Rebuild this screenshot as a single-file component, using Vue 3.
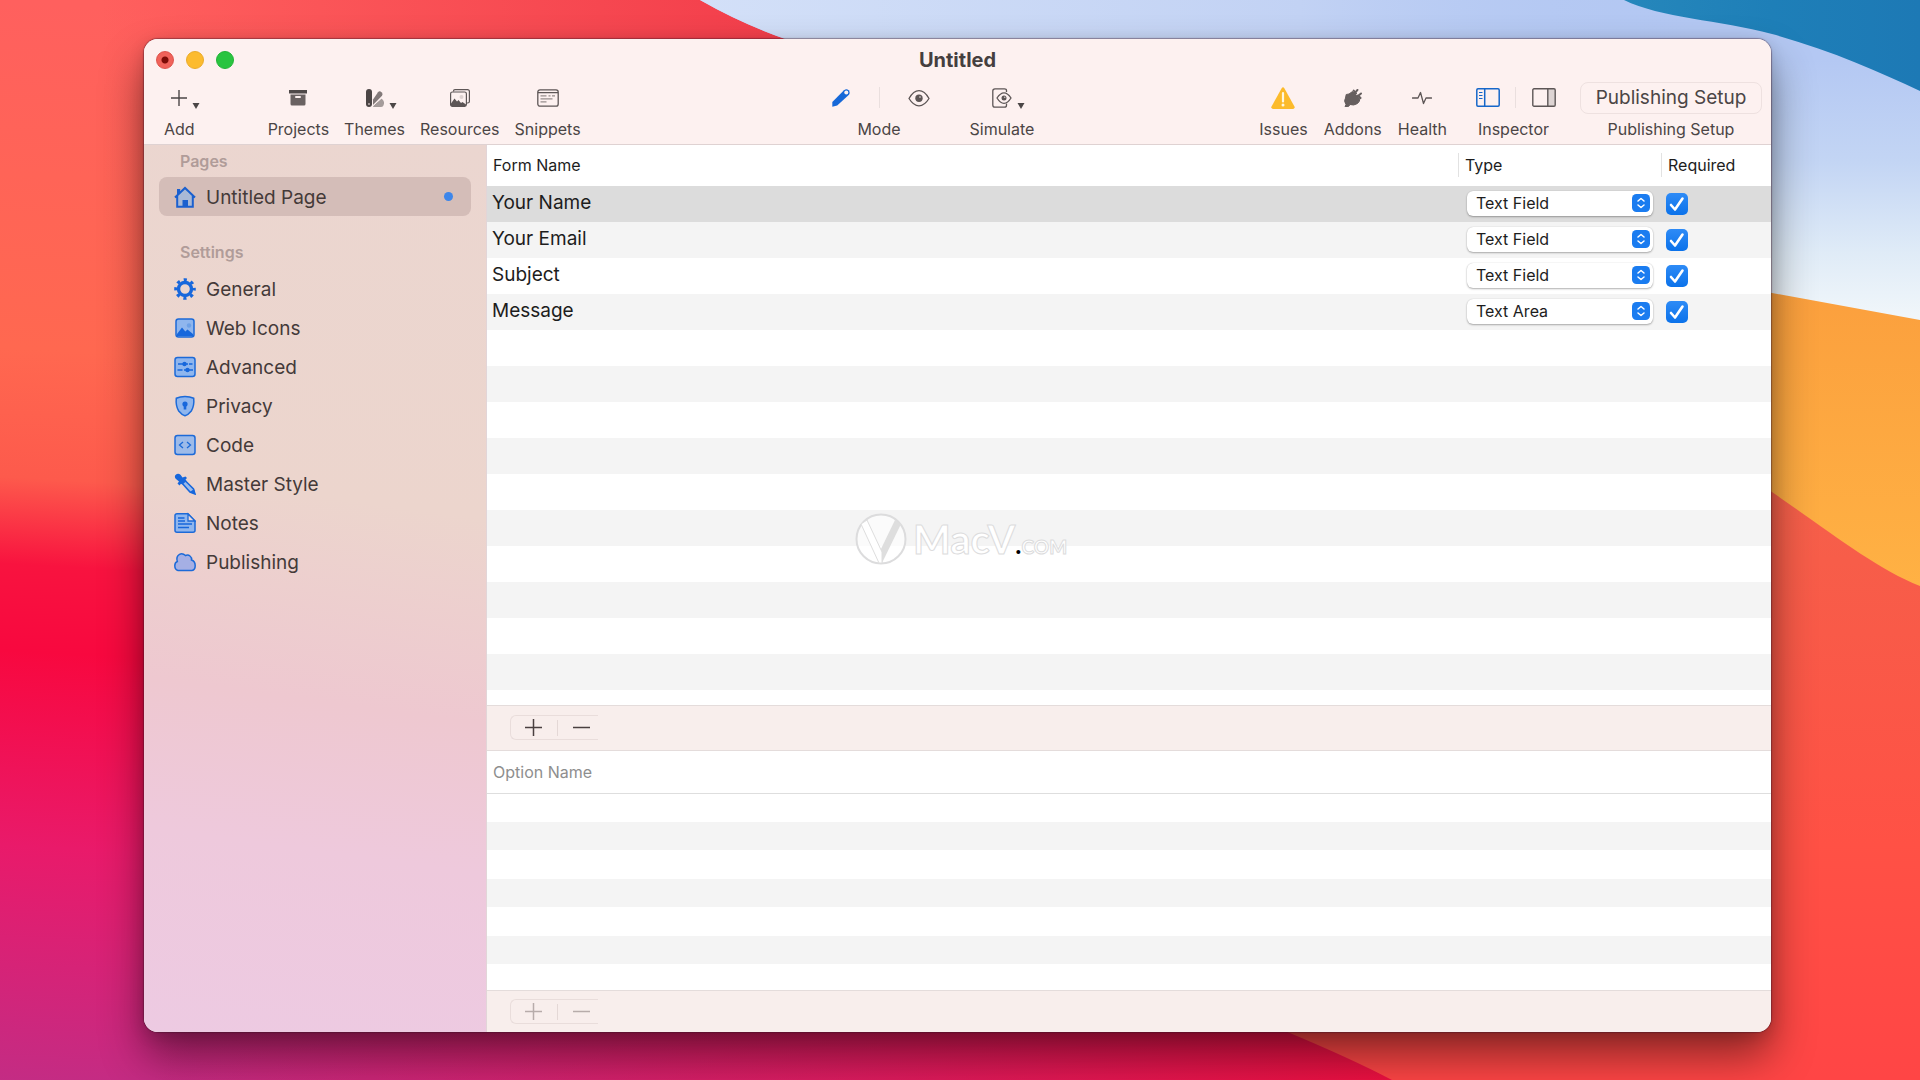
<script setup>
import { ref } from 'vue'

const settings = ['General', 'Web Icons', 'Advanced', 'Privacy', 'Code', 'Master Style', 'Notes', 'Publishing']

const fields = ref([
  { name: 'Your Name', type: 'Text Field', required: true },
  { name: 'Your Email', type: 'Text Field', required: true },
  { name: 'Subject', type: 'Text Field', required: true },
  { name: 'Message', type: 'Text Area', required: true },
])
const selected = ref(0)
const types = ['Text Field', 'Text Area']
</script>

<template>
  <div class="desktop">
    <svg class="wallpaper" viewBox="0 0 1920 1080" preserveAspectRatio="none" aria-hidden="true">
      <defs>
        <linearGradient id="warm" gradientUnits="userSpaceOnUse" x1="0" y1="0" x2="-60" y2="1080">
          <stop offset="0" stop-color="#ff605e" />
          <stop offset=".32" stop-color="#ff6850" />
          <stop offset=".44" stop-color="#fd5a4c" />
          <stop offset=".52" stop-color="#f8133f" />
          <stop offset=".6" stop-color="#f8083f" />
          <stop offset=".78" stop-color="#e91a6a" />
          <stop offset="1" stop-color="#c32c84" />
        </linearGradient>
        <linearGradient id="glow" x1="0" y1="0" x2="1" y2="0">
          <stop offset="0" stop-color="#f23c4a" stop-opacity="0" />
          <stop offset="1" stop-color="#f23c4a" />
        </linearGradient>
        <linearGradient id="floor" x1="0" y1="0" x2="1" y2="0">
          <stop offset="0" stop-color="#e81450" stop-opacity="0" />
          <stop offset="1" stop-color="#ee1040" />
        </linearGradient>
        <linearGradient id="sky" gradientUnits="userSpaceOnUse" x1="0" y1="60" x2="0" y2="315">
          <stop offset="0" stop-color="#b4c8f3" />
          <stop offset=".4" stop-color="#c3d5f4" />
          <stop offset=".75" stop-color="#dfebf7" />
          <stop offset="1" stop-color="#f0f6fa" />
        </linearGradient>
        <linearGradient id="skyTop" gradientUnits="userSpaceOnUse" x1="700" y1="0" x2="1700" y2="0">
          <stop offset="0" stop-color="#d3e0f8" />
          <stop offset=".6" stop-color="#c2d2f4" />
          <stop offset="1" stop-color="#b0c6f2" stop-opacity="0" />
        </linearGradient>
        <linearGradient id="amber" x1="0" y1="0" x2="0" y2="1">
          <stop offset="0" stop-color="#fb9e3d" />
          <stop offset="1" stop-color="#ffb244" />
        </linearGradient>
        <linearGradient id="coral" gradientUnits="userSpaceOnUse" x1="0" y1="490" x2="0" y2="1080">
          <stop offset="0" stop-color="#f5604a" />
          <stop offset=".6" stop-color="#ff5145" />
          <stop offset="1" stop-color="#ff4545" />
        </linearGradient>
        <linearGradient id="ocean" x1="0" y1="0" x2="1" y2="0">
          <stop offset="0" stop-color="#2687bb" />
          <stop offset=".5" stop-color="#1e7fb8" />
          <stop offset="1" stop-color="#1d79b5" />
        </linearGradient>
      </defs>
      <rect width="1920" height="1080" fill="url(#warm)" />
      <rect x="100" width="720" height="400" fill="url(#glow)" />
      <rect x="150" y="700" width="1250" height="380" fill="url(#floor)" />
      <path d="M700 0Q742 24 788 40L1000 340H1920V0Z" fill="url(#sky)" />
      <path d="M700 0Q742 24 788 40L850 60H1700V0Z" fill="url(#skyTop)" />
      <path d="M1624 0C1660 18 1720 20 1772 34C1830 50 1880 72 1920 91V0Z" fill="url(#ocean)" />
      <path d="M1600 262L1772 293L1920 320V600H1600Z" fill="url(#amber)" />
      <path d="M1600 370L1772 492C1830 532 1875 568 1920 586V1080H1392Q1350 1058 1285 1031L1200 900Z" fill="url(#coral)" />
    </svg>

    <main class="window">
      <header class="chrome">
        <div class="titlebar">
          <div class="lights">
            <button class="light close" aria-label="Close"></button>
            <button class="light minimise" aria-label="Minimise"></button>
            <button class="light zoom" aria-label="Zoom"></button>
          </div>
          <h1>Untitled</h1>
        </div>

        <div class="toolbar">
          <div class="tools left">
            <button class="tool add">
              <span class="glyph">
                <svg width="16" height="16" viewBox="0 0 16 16"><path d="M8 0V16M0 8H16" stroke="#4b4646" stroke-width="1.4" /></svg>
                <svg class="caret" width="8" height="6" viewBox="0 0 8 6"><path d="M.5 0h7L4 6Z" fill="#4b4646" /></svg>
              </span>
              Add
            </button>
            <button class="tool">
              <span class="glyph">
                <svg width="18" height="16" viewBox="0 0 18 16">
                  <path d="M0 0h18v3.500H0z" fill="#4f4949" />
                  <path d="M1.500 4.500h15V14a1.500 1.500 0 0 1-1.500 1.500H3A1.500 1.500 0 0 1 1.500 14Z" fill="#6a6262" />
                  <rect x="6" y="6" width="6" height="2" rx="1" fill="#fdf1f0" />
                </svg>
              </span>
              Projects
            </button>
            <button class="tool">
              <span class="glyph">
                <svg width="18" height="18" viewBox="0 0 18 18">
                  <path d="M7.500 16.500 15.500 9.500Q18.500 12 18 14.500 17.500 18 15 18H7Z" fill="#a59c9b" />
                  <path d="M7 10.500 12 3.200Q13.500 1.500 15.500 3.200 17.500 5 16 6.800L7 16Z" fill="#827979" />
                  <path d="M7.200 16.500 16 8.500" stroke="#fdf1f0" stroke-width="1" />
                  <rect width="6" height="18" rx="3" fill="#4b4545" />
                  <circle cx="3" cy="15" r="1" fill="#bdb2b1" />
                </svg>
                <svg class="caret" width="8" height="6" viewBox="0 0 8 6"><path d="M.5 0h7L4 6Z" fill="#4b4646" /></svg>
              </span>
              Themes
            </button>
            <button class="tool">
              <span class="glyph">
                <svg width="20" height="18" viewBox="0 0 20 18" fill="none" stroke="#5d5656" stroke-width="1.200">
                  <path d="M3.500 2.500V2Q3.500.6 5 .6h12.500Q19.400.6 19.400 2.500v10q0 1.500-1.900 1.500H17" />
                  <rect x=".6" y="3" width="15.800" height="14.400" rx="1.800" />
                  <path d="M1 14.500 4.500 9.500 7 12.500 8.500 11 11 14 12.500 13 16 15.500V17H1Z" fill="#5d5656" stroke="none" />
                  <circle cx="11.500" cy="8" r="2" fill="#ddd2d1" stroke="none" />
                </svg>
              </span>
              Resources
            </button>
            <button class="tool">
              <span class="glyph">
                <svg width="22" height="18" viewBox="0 0 22 18" fill="none" stroke="#5d5656" stroke-width="1.300">
                  <rect x=".8" y=".8" width="20.400" height="16.400" rx="2.200" />
                  <path d="M1 3.700h20" />
                  <path d="M3.500 6.800h6M11.500 6.800h2M15 6.800h3M3.500 9.800h12M3.500 12.800h6" stroke="#968d8c" stroke-width="1.200" />
                </svg>
              </span>
              Snippets
            </button>
          </div>

          <div class="tools centre">
            <div class="tool mode">
              <div class="glyph pair">
                <button aria-label="Edit">
                  <svg width="18" height="18" viewBox="0 0 18 18">
                    <path d="M.3 17.700V12.900L12 1.300Q14.500-.6 16.700 1.300 18.600 3.600 16.700 6L5.200 16.500Z" fill="#1668d8" />
                    <circle cx="14.300" cy="3.600" r="2" fill="#fdf1f0" />
                  </svg>
                </button>
                <i></i>
                <button aria-label="Preview">
                  <svg width="22" height="18" viewBox="0 0 22 18" fill="none">
                    <path d="M1 9.500Q5.500 1.700 11 1.700T21 9.500Q16.500 16.800 11 16.800T1 9.500Z" stroke="#5d5656" stroke-width="1.300" />
                    <circle cx="11" cy="9.300" r="3.700" fill="#5d5656" />
                    <circle cx="12" cy="8" r="1" fill="#b5abab" />
                  </svg>
                </button>
              </div>
              <span>Mode</span>
            </div>
            <button class="tool">
              <span class="glyph">
                <svg width="20" height="20" viewBox="0 0 20 20" fill="none" stroke="#5d5656" stroke-width="1.300">
                  <path d="M14.500 4V2.500Q14.500.8 12.500.8H3Q.8.8.8 3v14q0 2.200 2.200 2.200h9.500q2 0 2-2V15.500" />
                  <path d="M5 10Q8.300 4.800 12 4.800T19 10Q15.700 15.300 12 15.300T5 10Z" />
                  <circle cx="12" cy="10" r="2.500" fill="#5d5656" stroke="none" />
                  <circle cx="12.700" cy="9.200" r=".8" fill="#cdc4c3" stroke="none" />
                </svg>
                <svg class="caret" width="8" height="6" viewBox="0 0 8 6"><path d="M.5 0h7L4 6Z" fill="#4b4646" /></svg>
              </span>
              Simulate
            </button>
          </div>

          <div class="tools right">
            <button class="tool">
              <span class="glyph">
                <svg width="24" height="22" viewBox="0 0 24 22">
                  <path d="M10.800.9Q12-.4 13.200.9L23.600 19.700Q24 21.700 22.200 22H1.800Q0 21.700.4 19.700Z" fill="#fcbb2b" />
                  <path d="M12 6v8.500" stroke="#fff8df" stroke-width="2.200" stroke-linecap="round" />
                  <circle cx="12" cy="18" r="1.500" fill="#fff8df" />
                </svg>
              </span>
              Issues
            </button>
            <button class="tool">
              <span class="glyph">
                <svg width="18" height="18" viewBox="0 0 18 18">
                  <path d="M12 4.500 9.700 1.600M16.500 9 14 6.500M10.500 4.500 13.500.9M13.500 7.500 17 4.500" stroke="#665f5f" stroke-width="2" stroke-linecap="round" />
                  <path d="M8.500 2.500 15.800 10Q16 12.500 13.500 14.500 9.500 17 6 15.500L4.800 17.200Q2.500 18.500 1 17.700L2 15.500Q-.5 12 1.500 9L2.200 5.500 5 5Z" fill="#665f5f" stroke="#665f5f" stroke-linejoin="round" />
                </svg>
              </span>
              Addons
            </button>
            <button class="tool">
              <span class="glyph">
                <svg width="20" height="14" viewBox="0 0 20 14"><path d="M.5 7H6L8.500 1.500 11.500 12.500 14 7H19.500" fill="none" stroke="#5d5656" stroke-width="1.300" stroke-linejoin="round" stroke-linecap="round" /></svg>
              </span>
              Health
            </button>
            <div class="tool inspector">
              <div class="glyph pair">
                <button aria-label="Toggle sidebar">
                  <svg width="24" height="19" viewBox="0 0 24 19" fill="none" stroke="#1667c9" stroke-width="1.500">
                    <rect x=".8" y=".8" width="22.400" height="17.400" rx="1.200" /><path d="M8.700 1v17" />
                    <path d="M3 4.500h3.500M3 7.500h3.500M3 10.500h3.500" stroke-width="1" />
                  </svg>
                </button>
                <i></i>
                <button aria-label="Toggle inspector">
                  <svg width="24" height="19" viewBox="0 0 24 19" fill="none" stroke="#5d5656" stroke-width="1.400">
                    <path d="M16 1h7v17h-7z" fill="#ddd4d3" stroke="none" />
                    <rect x=".8" y=".8" width="22.400" height="17.400" rx="1.200" /><path d="M15.800 1v17" />
                  </svg>
                </button>
              </div>
              <span>Inspector</span>
            </div>
            <div class="tool setup">
              <div class="glyph"><button class="pill">Publishing Setup</button></div>
              <span>Publishing Setup</span>
            </div>
          </div>
        </div>
      </header>

      <div class="body">
        <nav class="sidebar">
          <section>
            <h2>Pages</h2>
            <a href="#page" class="entry current">
              <svg width="22" height="22" viewBox="0 0 22 22">
                <path d="M3.500 10 11 3l7.500 7v10.500h-15Z" fill="#a9b9d6" />
                <path d="M1 11.500 11 2l10 9.500M3.200 10V20.700H18.800V10" fill="none" stroke="#1a60cf" stroke-width="2" />
                <path d="M3 3h3.200v4L3 9.500ZM8.500 14h5.500v7H8.500Z" fill="#1a60cf" />
              </svg>
              Untitled Page
              <b class="dot"></b>
            </a>
          </section>
          <section>
            <h2>Settings</h2>
            <a v-for="item in settings" :key="item" href="#settings" class="entry">
              <svg v-if="item === 'General'" width="22" height="22" viewBox="0 0 22 22" fill="none" stroke="#1767dc">
                <circle cx="11" cy="11" r="6.500" stroke-width="3.400" />
                <circle cx="11" cy="11" r="9.300" stroke-width="3" stroke-dasharray="3.200 4.104" stroke-dashoffset="1.600" />
              </svg>
              <svg v-else-if="item === 'Web Icons'" width="22" height="22" viewBox="0 0 22 22">
                <rect x="2" y="2" width="18" height="18" rx="2.500" fill="#8fb6ee" stroke="#1c6ad8" stroke-width="1.500" />
                <path d="M3 17 8 10.500l3.300 4 2.200-2L19 17v2H3Z" fill="#1767dc" /><circle cx="15" cy="8.500" r="2.200" fill="#6ea1e6" />
              </svg>
              <svg v-else-if="item === 'Advanced'" width="22" height="22" viewBox="0 0 22 22">
                <rect x="1" y="1.500" width="20" height="19" rx="2.500" fill="#8fb6ee" stroke="#1c6ad8" stroke-width="1.500" />
                <path d="M4 8h10M15 8h3.500M3.500 14h5M10 14h9" stroke="#1767dc" stroke-width="1.400" /><circle cx="10.500" cy="8" r="2.200" fill="#1767dc" /><circle cx="13.500" cy="14" r="2.200" fill="#1767dc" />
              </svg>
              <svg v-else-if="item === 'Privacy'" width="22" height="22" viewBox="0 0 22 22">
                <path d="M11 1.500Q16 1.500 19.700 3.200 20.500 11 17.300 16 14 20 11 20.800 8 20 4.700 16 1.500 11 2.300 3.200 6 1.500 11 1.500Z" fill="#8fb6ee" stroke="#1c6ad8" stroke-width="1.500" />
                <circle cx="11" cy="9" r="2.600" fill="#1767dc" /><path d="M9.700 10h2.600v4.500H9.700Z" fill="#1767dc" />
              </svg>
              <svg v-else-if="item === 'Code'" width="22" height="22" viewBox="0 0 22 22">
                <rect x="1" y="1.500" width="20" height="19" rx="2.500" fill="#9dbbe9" stroke="#1c6ad8" stroke-width="1.500" />
                <path d="M9 8 5.500 11 9 14M13 8l3.500 3-3.500 3" fill="none" stroke="#1c6ad8" stroke-width="1.300" />
              </svg>
              <svg v-else-if="item === 'Master Style'" width="22" height="22" viewBox="0 0 22 22">
                <path d="M8 10 11 7.500 19.500 16 21 21 16 19Z" fill="#9dbbe9" stroke="#1767dc" stroke-width="1.500" />
                <path d="M1.500 2Q4-.2 6.500 1.800L8.500 4.500 11.500 3.500 13 5 11.500 6.500 12.500 8 8.500 11.500 7 10.800 5.500 12.500 3.500 10.500 5 8.500 2 6Q0 4 1.500 2ZM16 19l4-3 1.500 5.500Z" fill="#1767dc" />
              </svg>
              <svg v-else-if="item === 'Notes'" width="22" height="22" viewBox="0 0 22 22">
                <path d="M3 1.800H14L21 9v9.500q0 1.700-2 1.700H3q-2 0-2-1.700v-15Q1 1.800 3 1.800Z" fill="#8fb6ee" stroke="#1c6ad8" stroke-width="1.500" />
                <path d="M14 2v7h7Z" fill="#ecd9da" stroke="#1c6ad8" stroke-width="1.300" />
                <path d="M4 6h6.500M4 9h7M4 12h14M4 15.500h11" stroke="#1767dc" stroke-width="1.400" />
              </svg>
              <svg v-else width="22" height="22" viewBox="0 0 22 22">
                <path d="M4 19.500Q.8 18.700.8 14.800.8 11.300 3.300 10.500 1.800 5.500 5.500 3.300 8.500 1.700 11.500 4.500 14 3.300 16 5 18 6.500 17.500 9 21.200 10 21.200 14.800 21.200 19 18 19.500Z" fill="#a5afe4" stroke="#1c6ad8" stroke-width="1.500" />
              </svg>
              {{ item }}
            </a>
          </section>
        </nav>

        <div class="content">
          <div class="pane fields">
            <table>
              <thead>
                <tr><th>Form Name</th><th class="type"><span>Type</span></th><th class="required"><span>Required</span></th></tr>
              </thead>
              <tbody>
                <tr v-for="(field, i) in fields" :key="field.name" :class="{ selected: i === selected }" @click="selected = i">
                  <td>{{ field.name }}</td>
                  <td class="type">
                    <div class="popup">
                      <select v-model="field.type" :aria-label="'Type of ' + field.name">
                        <option v-for="t in types" :key="t">{{ t }}</option>
                      </select>
                      <svg width="18" height="18" viewBox="0 0 18 18">
                        <rect width="18" height="18" rx="4.500" fill="#1a7cf0" />
                        <path d="M6 7 9 4.500 12 7M6 11l3 2.500L12 11" fill="none" stroke="#fff" stroke-width="1.500" stroke-linecap="round" stroke-linejoin="round" />
                      </svg>
                    </div>
                  </td>
                  <td class="required">
                    <div class="tick">
                      <input v-model="field.required" type="checkbox" :aria-label="field.name + ' is required'">
                      <svg width="22" height="22" viewBox="0 0 22 22"><path d="M5 12 9 16.500 16.500 5.500" fill="none" stroke="#fff" stroke-width="2.600" stroke-linecap="round" stroke-linejoin="round" /></svg>
                    </div>
                  </td>
                </tr>
              </tbody>
            </table>
          </div>
          <div class="strip">
            <div class="segments">
              <button aria-label="Add field"><svg width="17" height="17" viewBox="0 0 17 17"><path d="M8.500 0V17M0 8.500H17" stroke="currentColor" stroke-width="1.500" /></svg></button>
              <i></i>
              <button aria-label="Remove field"><svg width="17" height="17" viewBox="0 0 17 17"><path d="M0 8.500H17" stroke="currentColor" stroke-width="1.500" /></svg></button>
            </div>
          </div>
          <div class="pane options">
            <table>
              <thead><tr><th>Option Name</th></tr></thead>
            </table>
          </div>
          <div class="strip last">
            <div class="segments">
              <button disabled aria-label="Add option"><svg width="17" height="17" viewBox="0 0 17 17"><path d="M8.500 0V17M0 8.500H17" stroke="currentColor" stroke-width="1.500" /></svg></button>
              <i></i>
              <button disabled aria-label="Remove option"><svg width="17" height="17" viewBox="0 0 17 17"><path d="M0 8.500H17" stroke="currentColor" stroke-width="1.500" /></svg></button>
            </div>
          </div>
        </div>
      </div>
    </main>

    <div class="watermark">
      <svg width="52" height="52" viewBox="0 0 52 52">
        <circle cx="26" cy="26" r="24.500" fill="#fff" fill-opacity=".6" stroke="#dcdcdd" stroke-width="2" />
        <path d="M40 7 46 11 27 50H25V38Z" fill="#dedede" />
        <path d="M6 11 12 7 27 39V50H24Z" fill="#fff" stroke="#dedede" />
      </svg>
      <p>MacV<em>.</em><small>COM</small></p>
    </div>
  </div>
</template>

<style>
body { margin: 0; }
</style>

<style scoped>
.desktop {
  position: relative;
  box-sizing: border-box;
  display: flex;
  min-height: 100vh;
  padding: 39px 149px 48px 144px;
  overflow: hidden;
  font-family: Inter, "Liberation Sans", sans-serif;
  color: #1d1d1d;
}
.desktop * { box-sizing: border-box; }
.wallpaper { position: absolute; inset: 0; width: 100%; height: 100%; }
button {
  display: flex;
  align-items: center;
  justify-content: center;
  padding: 0;
  border: 0;
  background: none;
  font: inherit;
  color: inherit;
}
svg { display: block; flex: none; }

.window {
  position: relative;
  flex: 1;
  display: flex;
  flex-direction: column;
  min-width: 0;
  border-radius: 14px;
  overflow: hidden;
  background: #fff;
  box-shadow: 0 0 1px 1px rgba(60, 20, 40, .4), 0 24px 44px rgba(0, 0, 0, .46), 0 4px 16px rgba(0, 0, 0, .14);
}
.chrome { background: #fdf1f0; border-bottom: 1px solid #dfd2d2; color: #4b4545; }
.titlebar {
  display: grid;
  grid-template-columns: 1fr auto 1fr;
  align-items: center;
  height: 41px;
  padding: 0 12px;
}
.lights { display: flex; gap: 12px; }
.light { width: 18px; height: 18px; border-radius: 50%; }
.close { background: radial-gradient(circle, #7c0b06 3px, #f0625a 4px); border: 1px solid #dd5149; }
.minimise { background: #fcbb2f; border: 1px solid #eaab2b; }
.zoom { background: #29c440; border: 1px solid #22b337; }
h1 { margin: 0; font-size: 20px; line-height: 24px; font-weight: 700; color: #453f3f; }

.toolbar { display: flex; justify-content: space-between; height: 64px; padding: 0 9px 0 20px; }
.tools { display: flex; gap: 15px; }
.tools.centre { padding-left: 27px; gap: 39px; }
.tools.right { gap: 16px; }
.tool {
  display: flex;
  flex-direction: column;
  align-items: center;
  justify-content: flex-start;
  font-size: 16px;
  line-height: 28px;
  white-space: nowrap;
}
.add { margin-right: 58px; }
.glyph { position: relative; display: flex; align-items: center; height: 35px; }
.caret { position: absolute; left: calc(100% + 5px); top: 23px; }
.pair { justify-content: space-between; width: 98px; }
.pair i { width: 1px; height: 21px; background: #eadfde; }
.mode > span, .inspector > span { padding-right: 5px; }
.inspector { margin: 0 8px 0 13px; }
.inspector .pair { width: 80px; }
.pill {
  width: 182px;
  height: 32px;
  border: 1px solid #eee1e0;
  border-radius: 8px;
  font-size: 19px;
}

.body { flex: 1; display: flex; }
.sidebar {
  width: 343px;
  padding: 0 15px;
  border-right: 1px solid #e2d5d8;
  background: linear-gradient(188deg, #ebd6d0 0%, #ecd5cd 40%, #eec8d0 62%, #eec9dc 78%, #edcae2 100%);
}
section + section { margin-top: 20px; }
h2 { margin: 0; padding-left: 21px; font-size: 16px; line-height: 32px; font-weight: 600; color: #b09c99; }
section + section h2 { margin-bottom: 2px; }
.entry {
  display: flex;
  align-items: center;
  gap: 10px;
  height: 39px;
  padding: 0 18px 0 15px;
  border-radius: 8px;
  font-size: 19px;
  color: #443a39;
  text-decoration: none;
}
.entry svg { margin-bottom: 2px; }
.current { padding-top: 2px; background: #d4bdb8; }
.dot { width: 9px; height: 9px; margin: 0 0 2px auto; border-radius: 50%; background: #3d86ea; }

.content { flex: 1; display: flex; flex-direction: column; min-width: 0; }
table { width: 100%; border-collapse: collapse; table-layout: fixed; }
th { padding: 0 0 2px 6px; text-align: left; font-size: 16px; font-weight: 400; line-height: 24px; }
td { height: 36px; padding: 0 0 3px 5px; font-size: 19px; line-height: 24px; }
th.type { width: 203px; }
th.required { width: 110px; }
th.type, th.required { padding-left: 0; }
th span { display: block; border-left: 1px solid #e2e2e2; padding-left: 6px; }
.fields { flex: 1; background: repeating-linear-gradient(#f4f4f4 0 36px, #fff 36px 72px) 0 77px / 100% 100% no-repeat; }
.fields thead tr { height: 41px; }
tr.selected { background: #dcdcdc; }
td.type { padding: 0 8px 2px 9px; }
td.required { padding: 0 0 0 5px; }
.popup { position: relative; height: 25px; }
select {
  appearance: none;
  display: block;
  width: 100%;
  height: 25px;
  margin: 0;
  padding: 0 28px 0 9px;
  border: 0;
  border-radius: 6px;
  background: #fff;
  box-shadow: 0 1px 2px rgba(0, 0, 0, .3), 0 0 1px rgba(0, 0, 0, .2);
  font: 16px/25px Inter, "Liberation Sans", sans-serif;
  color: #1d1d1d;
}
.popup svg { position: absolute; right: 3px; top: 3px; pointer-events: none; }
.tick { display: grid; width: 22px; height: 22px; }
.tick > * { grid-area: 1 / 1; }
.tick svg { pointer-events: none; visibility: hidden; }
.tick input { appearance: none; width: 22px; height: 22px; margin: 0; border-radius: 5px; background: #fff; border: 1px solid #ccc; }
.tick input:checked { background: linear-gradient(#2e8bf6, #0b72ea); border: 0; }
.tick input:checked + svg { visibility: visible; }

.strip {
  display: flex;
  align-items: flex-start;
  height: 46px;
  padding: 9px 0 0 23px;
  border-top: 1px solid #e4dcdb;
  border-bottom: 1px solid #e4dcdb;
  background: #f8eeec;
  color: #4a4040;
}
.strip.last { height: 42px; padding-top: 8px; border-bottom: 0; }
.segments {
  display: flex;
  align-items: center;
  width: 88px;
  height: 25px;
  border: 1px solid #e9dddb;
  border-right: 0;
  border-radius: 6px 0 0 6px;
}
.segments button { width: 46px; height: 23px; padding-right: 2px; }
.segments i { width: 1px; height: 16px; background: #e4d8d6; }
.segments i + button { width: 40px; padding: 0 0 0 6px; }
.segments button:disabled { color: #b7acaa; }
.options { height: 239px; background: repeating-linear-gradient(#fff 0 29px, #f4f4f4 29px 57px) 0 42px / 100% 100% no-repeat; }
.options thead tr { height: 42px; border-bottom: 1px solid #dedede; }
.options th { padding-bottom: 0; color: #8e8e8e; }

.watermark {
  position: absolute;
  left: 855px;
  top: 513px;
  display: flex;
  gap: 6px;
  pointer-events: none;
}
.watermark p {
  margin: 0;
  font: 700 40px/52px Lato, sans-serif;
  color: #fff;
  -webkit-text-stroke: 1px #dcdcdd;
}
.watermark em { font-style: normal; font-size: 26px; line-height: 30px; color: #000; -webkit-text-stroke: 0; }
.watermark small { font-size: 19px; }
</style>
